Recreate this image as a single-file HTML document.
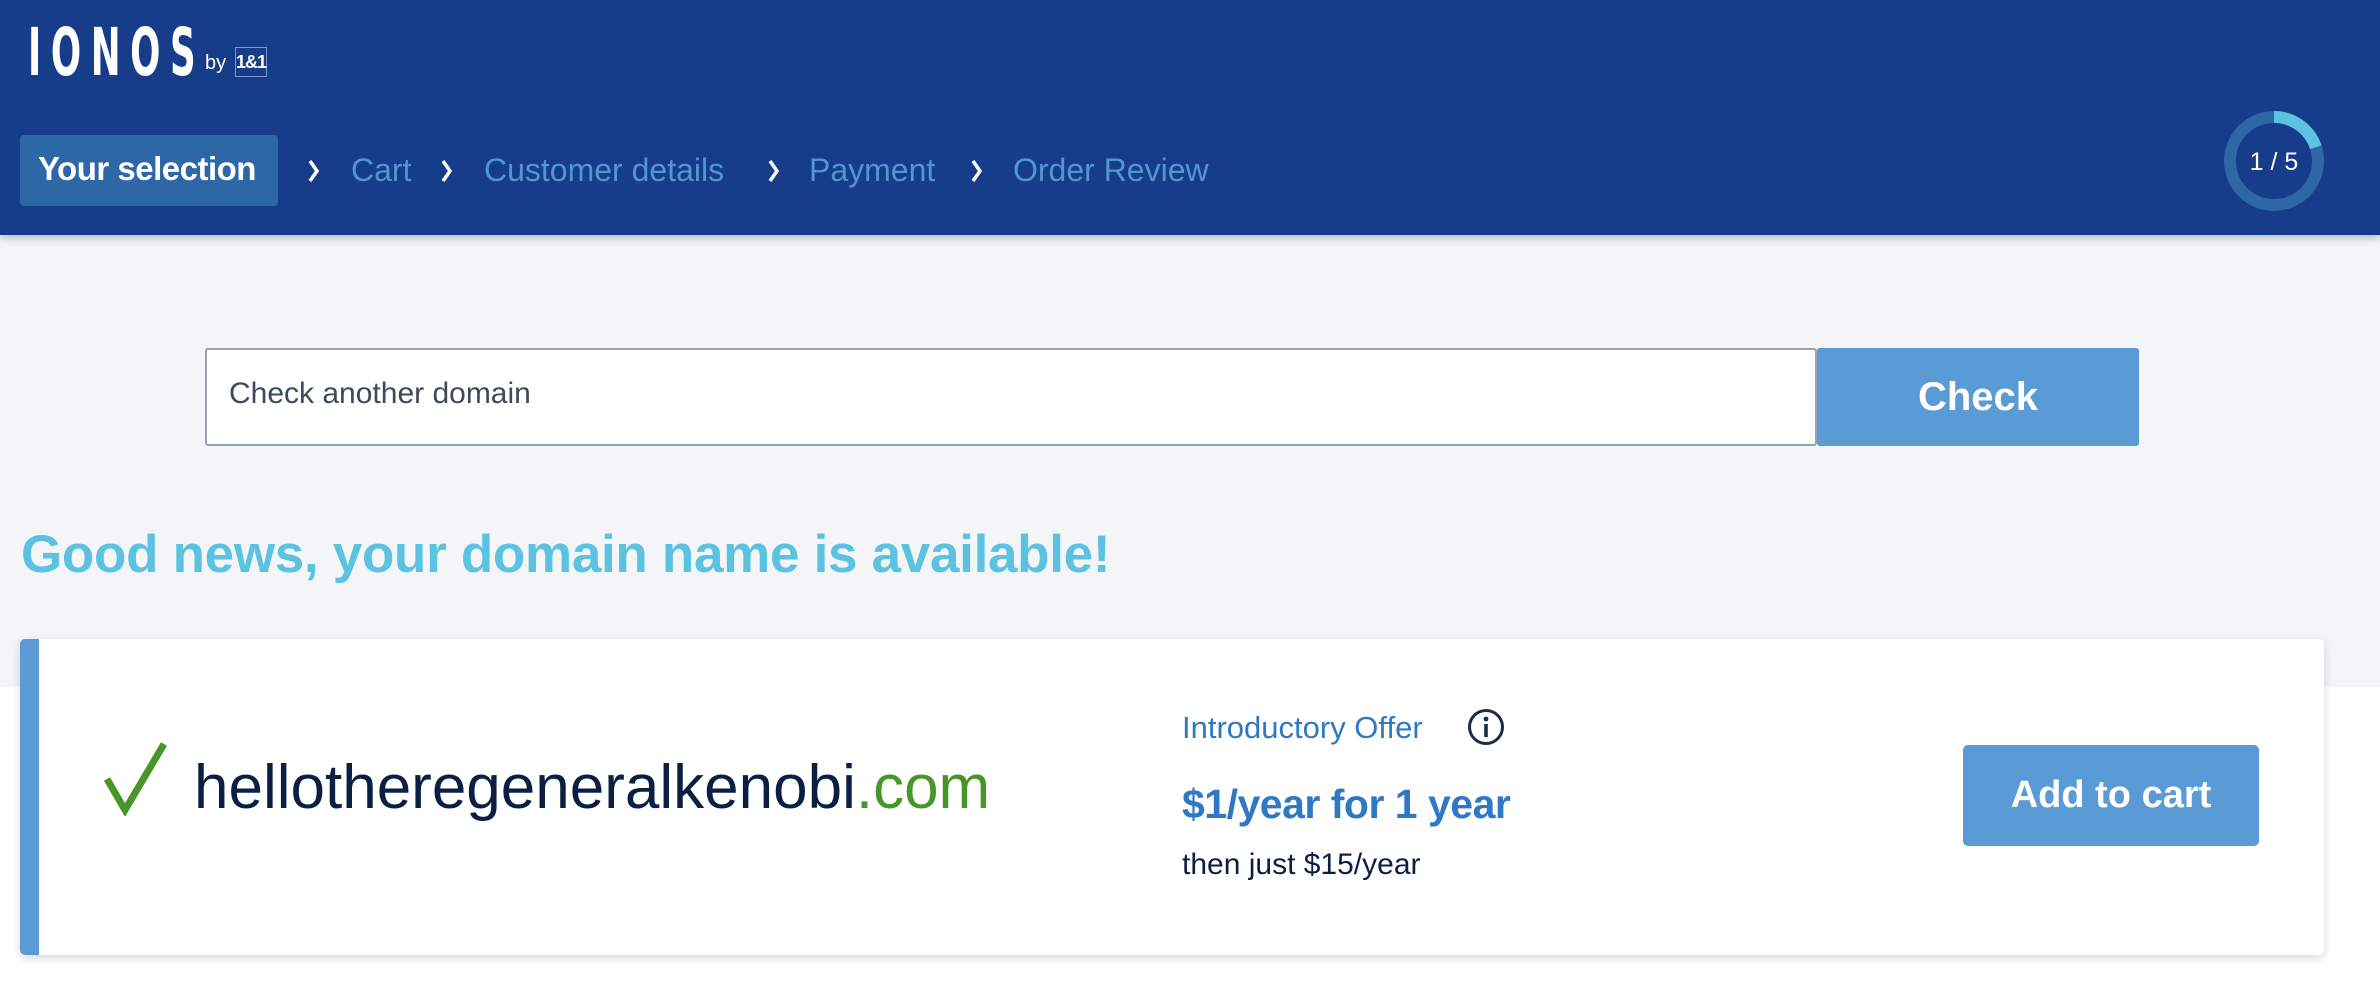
<!DOCTYPE html>
<html><head><meta charset="utf-8"><style>
*{margin:0;padding:0;box-sizing:border-box}
body{width:2380px;height:982px;background:#fff;font-family:"Liberation Sans",sans-serif;position:relative;overflow:hidden}
.abs{position:absolute;white-space:nowrap}
#hdr{position:absolute;left:0;top:0;width:2380px;height:235px;background:#163c8a;box-shadow:0 3px 8px rgba(0,0,0,.25);z-index:2}
#grey{position:absolute;left:0;top:235px;width:2380px;height:452px;background:#f4f5f7}
.crumb{color:#4f97cd;font-size:32px;top:152px}
.chev{top:159px}
</style></head><body>
<div id="hdr">
 <div class="abs" style="left:28px;top:20px;color:#fff;font-size:66px;font-weight:bold;letter-spacing:16px;font-family:'DejaVu Sans Condensed','Liberation Sans Narrow',sans-serif;transform:scaleX(.6);transform-origin:left;line-height:66px">IONOS</div>
 <div class="abs" style="left:205px;top:52px;color:#fff;font-size:20px">by</div>
 <div class="abs" style="left:235px;top:47px;width:32px;height:30px;border:1px solid #7d95c8;color:#fff;font-size:18px;font-weight:bold;text-align:center;line-height:28px;letter-spacing:-1px">1&amp;1</div>
 <div class="abs" style="left:20px;top:135px;width:258px;height:71px;background:#2d67a6;border-radius:4px"></div>
 <div class="abs" style="left:38px;top:150px;color:#fff;font-size:33px;font-weight:bold;letter-spacing:-0.5px">Your selection</div>
 <svg class="abs chev" style="left:307px" width="14" height="24" viewBox="0 0 14 24"><path d="M3 2 L10 12 L3 22" fill="none" stroke="#fff" stroke-width="3.5"/></svg>
 <div class="abs crumb" style="left:351px">Cart</div>
 <svg class="abs chev" style="left:440px" width="14" height="24" viewBox="0 0 14 24"><path d="M3 2 L10 12 L3 22" fill="none" stroke="#fff" stroke-width="3.5"/></svg>
 <div class="abs crumb" style="left:484px">Customer details</div>
 <svg class="abs chev" style="left:767px" width="14" height="24" viewBox="0 0 14 24"><path d="M3 2 L10 12 L3 22" fill="none" stroke="#fff" stroke-width="3.5"/></svg>
 <div class="abs crumb" style="left:809px">Payment</div>
 <svg class="abs chev" style="left:970px" width="14" height="24" viewBox="0 0 14 24"><path d="M3 2 L10 12 L3 22" fill="none" stroke="#fff" stroke-width="3.5"/></svg>
 <div class="abs crumb" style="left:1013px">Order Review</div>
 <svg class="abs" style="left:2218px;top:105px" width="112" height="112" viewBox="0 0 112 112">
  <circle cx="56" cy="56" r="44" fill="none" stroke="#2d67a6" stroke-width="12"/>
  <circle cx="56" cy="56" r="44" fill="none" stroke="#5bc2e2" stroke-width="12" stroke-dasharray="55 400" transform="rotate(-90 56 56)"/>
  <text x="56" y="65" fill="#fff" font-size="25" text-anchor="middle" font-family="Liberation Sans">1 / 5</text>
 </svg>
</div>
<div id="grey"></div>
<div class="abs" style="left:205px;top:348px;width:1612px;height:98px;background:#fff;border:2px solid #9aa3ad;border-radius:3px"></div>
<div class="abs" style="left:229px;top:377px;font-size:30px;color:#3c4a5c">Check another domain</div>
<div class="abs" style="left:1817px;top:348px;width:322px;height:98px;background:#5a9bd5;border-radius:3px;color:#fff;font-size:40px;font-weight:bold;text-align:center;line-height:98px">Check</div>
<div class="abs" style="left:21px;top:524px;font-size:53px;font-weight:bold;color:#5bc2e2;letter-spacing:-0.3px">Good news, your domain name is available!</div>
<div class="abs" style="left:20px;top:639px;width:2304px;height:316px;background:#fff;border-radius:5px;box-shadow:0 3px 10px rgba(0,0,0,.15);border-left:19px solid #5a9bd5"></div>
<svg class="abs" style="left:102px;top:740px" width="70" height="76" viewBox="0 0 70 76"><path d="M5 39 L23 70 L62 4" fill="none" stroke="#47962a" stroke-width="7" stroke-linejoin="miter"/></svg>
<div class="abs" style="left:194px;top:752px;font-size:62px;color:#0b1f44;letter-spacing:0px">hellotheregeneralkenobi<span style="color:#47962a">.com</span></div>
<div class="abs" style="left:1182px;top:710px;font-size:31px;color:#2f78c4">Introductory Offer</div>
<svg class="abs" style="left:1466px;top:707px" width="40" height="40" viewBox="0 0 40 40"><circle cx="20" cy="20" r="16.5" fill="none" stroke="#1c2b4a" stroke-width="3"/><circle cx="20" cy="12" r="2.4" fill="#1c2b4a"/><rect x="18.2" y="17" width="3.6" height="13" fill="#1c2b4a"/></svg>
<div class="abs" style="left:1182px;top:781px;font-size:41px;font-weight:bold;color:#2f78c4;letter-spacing:-0.5px">$1/year for 1 year</div>
<div class="abs" style="left:1182px;top:848px;font-size:30px;color:#0b1f44">then just $15/year</div>
<div class="abs" style="left:1963px;top:745px;width:296px;height:101px;background:#5a9bd5;border-radius:5px;color:#fff;font-size:38px;font-weight:bold;text-align:center;line-height:101px">Add to cart</div>
</body></html>
